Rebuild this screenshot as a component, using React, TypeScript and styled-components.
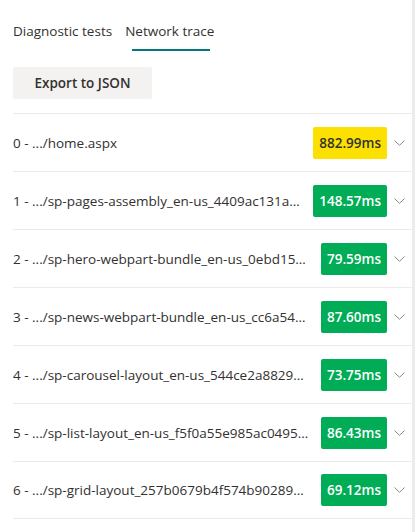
import React from "react";
import styled, { createGlobalStyle } from "styled-components";

const Global = createGlobalStyle`
  html, body { margin: 0; padding: 0; background: #fff; }
  body { font-family: "Open Sans", "Noto Sans", sans-serif; color: #323130; }
`;

const Shell = styled.div`
  display: flex;
  width: 415px;
  height: 532px;
  overflow: hidden;
`;

const Main = styled.div`
  flex: 1;
  min-width: 0;
  padding-left: 13px;
`;

const Track = styled.div`
  width: 3px;
  background: #ececec;
`;

const Tabs = styled.div`
  display: flex;
  gap: 13px;
  height: 51px;
  align-items: stretch;
`;

const Tab = styled.div<{ $active?: boolean }>`
  position: relative;
  display: flex;
  align-items: center;
  font-size: 13.5px;
  padding-top: 10px;
  box-sizing: border-box;
  &::after {
    content: "";
    display: ${(p) => (p.$active ? "block" : "none")};
    position: absolute;
    left: 7px;
    right: 4px;
    bottom: 0px;
    height: 2px;
    background: #03787c;
  }
`;

const Toolbar = styled.div`
  padding-top: 16px;
  padding-bottom: 14px;
`;

const Button = styled.button`
  width: 139px;
  height: 32px;
  border: none;
  border-radius: 2px;
  background: #f3f2f1;
  color: #323130;
  font-family: inherit;
  font-size: 13.5px;
  font-weight: 600;
  cursor: pointer;
`;

const List = styled.div`
  display: flex;
  flex-direction: column;
`;

const Row = styled.div`
  display: flex;
  align-items: center;
  height: 58px;
  box-sizing: border-box;
  border-top: 1px solid #edebe9;
  &:last-child {
    border-bottom: 1px solid #edebe9;
  }
`;

const Name = styled.div`
  flex: 1;
  min-width: 0;
  white-space: nowrap;
  overflow: hidden;
  text-overflow: ellipsis;
  font-size: 13.5px;
  padding-right: 10px;
`;

const Badge = styled.div<{ $slow?: boolean }>`
  flex: none;
  height: 32px;
  display: flex;
  align-items: center;
  padding: 0 6px;
  border-radius: 2px;
  font-size: 13.5px;
  font-weight: 600;
  background: ${(p) => (p.$slow ? "#fce100" : "#00ad56")};
  color: ${(p) => (p.$slow ? "#323130" : "#ffffff")};
`;

const Chevron = styled.div`
  flex: none;
  width: 25px;
  height: 32px;
  display: flex;
  align-items: center;
  justify-content: center;
  color: #605e5c;
`;

const rows = [
  { name: "0 - .../home.aspx", ms: "882.99ms", slow: true },
  { name: "1 - .../sp-pages-assembly_en-us_4409ac131a9c5d8e7b2f.js", ms: "148.57ms" },
  { name: "2 - .../sp-hero-webpart-bundle_en-us_0ebd15b9a2c44f1e.js", ms: "79.59ms" },
  { name: "3 - .../sp-news-webpart-bundle_en-us_cc6a541e8d7b2a90.js", ms: "87.60ms" },
  { name: "4 - .../sp-carousel-layout_en-us_544ce2a88295f1b7c3.js", ms: "73.75ms" },
  { name: "5 - .../sp-list-layout_en-us_f5f0a55e985ac04953e2b1.js", ms: "86.43ms" },
  { name: "6 - .../sp-grid-layout_257b0679b4f574b902897c1d2e.js", ms: "69.12ms" },
];

export default function App() {
  return (
    <>
      <Global />
      <Shell>
        <Main>
          <Tabs>
            <Tab>Diagnostic tests</Tab>
            <Tab $active>Network trace</Tab>
          </Tabs>
          <Toolbar>
            <Button>Export to JSON</Button>
          </Toolbar>
          <List>
            {rows.map((r) => (
              <Row key={r.name}>
                <Name>{r.name}</Name>
                <Badge $slow={r.slow}>{r.ms}</Badge>
                <Chevron>
                  <svg width="11" height="6" viewBox="0 0 11 6">
                    <path d="M0.5 0.5 L5.5 5.3 L10.5 0.5" fill="none" stroke="#8a8886" strokeWidth="1" />
                  </svg>
                </Chevron>
              </Row>
            ))}
          </List>
        </Main>
        <Track />
      </Shell>
    </>
  );
}
